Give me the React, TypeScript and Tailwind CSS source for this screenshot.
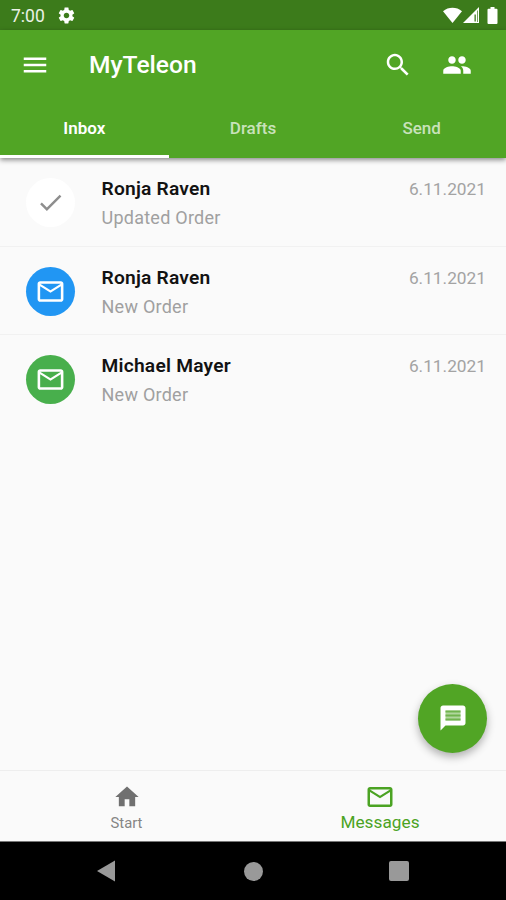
import React from "react";

const MAIL =
  "M20 4H4c-1.1 0-1.99.9-1.99 2L2 18c0 1.1.9 2 2 2h16c1.1 0 2-.9 2-2V6c0-1.1-.9-2-2-2zm0 14H4V8l8 5 8-5v10zm-8-7L4 6h16l-8 5z";
const MENU = "M3 18h18v-2H3v2zm0-5h18v-2H3v2zm0-7v2h18V6H3z";
const SEARCH =
  "M15.5 14h-.79l-.28-.27C15.41 12.59 16 11.11 16 9.5 16 5.91 13.09 3 9.5 3S3 5.91 3 9.5 5.91 16 9.5 16c1.61 0 3.09-.59 4.23-1.57l.27.28v.79l5 4.99L20.49 19l-4.99-5zm-6 0C7.01 14 5 11.99 5 9.5S7.01 5 9.5 5 14 7.01 14 9.5 11.99 14 9.5 14z";
const PEOPLE =
  "M16 11c1.66 0 2.99-1.34 2.99-3S17.66 5 16 5c-1.66 0-3 1.34-3 3s1.34 3 3 3zm-8 0c1.66 0 2.99-1.34 2.99-3S9.66 5 8 5C6.34 5 5 6.34 5 8s1.34 3 3 3zm0 2c-2.33 0-7 1.17-7 3.5V19h14v-2.5c0-2.33-4.67-3.5-7-3.5zm8 0c-.29 0-.62.02-.97.05 1.16.84 1.97 1.97 1.97 3.45V19h6v-2.5c0-2.33-4.67-3.5-7-3.5z";
const SETTINGS =
  "M19.43 12.98c.04-.32.07-.64.07-.98s-.03-.66-.07-.98l2.11-1.65c.19-.15.24-.42.12-.64l-2-3.46c-.12-.22-.39-.3-.61-.22l-2.49 1c-.52-.4-1.08-.73-1.69-.98l-.38-2.65C14.46 2.18 14.25 2 14 2h-4c-.25 0-.46.18-.49.42l-.38 2.65c-.61.25-1.17.59-1.69.98l-2.49-1c-.23-.09-.49 0-.61.22l-2 3.46c-.13.22-.07.49.12.64l2.11 1.65c-.04.32-.07.65-.07.98s.03.66.07.98l-2.11 1.65c-.19.15-.24.42-.12.64l2 3.46c.12.22.39.3.61.22l2.49-1c.52.4 1.08.73 1.69.98l.38 2.65c.03.24.24.42.49.42h4c.25 0 .46-.18.49-.42l.38-2.65c.61-.25 1.17-.59 1.69-.98l2.49 1c.23.09.49 0 .61-.22l2-3.46c.12-.22.07-.49-.12-.64l-2.11-1.65zM12 15.5c-1.93 0-3.5-1.57-3.5-3.5s1.57-3.5 3.5-3.5 3.5 1.57 3.5 3.5-1.57 3.5-3.5 3.5z";
const CHECK = "M9 16.17L4.83 12l-1.42 1.41L9 19 21 7l-1.41-1.41z";
const HOME = "M10 20v-6h4v6h5v-8h3L12 3 2 12h3v8z";
const MESSAGE =
  "M20 2H4c-1.1 0-1.99.9-1.99 2L2 22l4-4h14c1.1 0 2-.9 2-2V4c0-1.1-.9-2-2-2z";

function Icon({ d, className }: { d: string; className: string }) {
  return (
    <svg viewBox="0 0 24 24" fill="currentColor" className={className} aria-hidden="true">
      <path d={d} />
    </svg>
  );
}

function StatusBar() {
  return (
    <div className="flex h-[30px] items-center justify-between bg-[#3c7b1b] pl-[11px] pr-[8px] text-white">
      <div className="flex items-center gap-[12px]">
        <span className="pt-[3px] text-[17.5px] leading-none text-white/90">7:00</span>
        <Icon d={SETTINGS} className="size-[19px]" />
      </div>
      <div className="flex items-center">
        <svg viewBox="0 0 19 16" className="h-4 w-[19px]" fill="currentColor">
          <path d="M0 4.2C5.5-.4 13.500-.4 19 4.200L9.500 16z" />
        </svg>
        <svg viewBox="0 0 17 17" className="ml-px h-[17px] w-[17px]" fill="currentColor">
          <path d="M16 0v16H0z" />
          <path d="M11.500 7.500h1.300v7h-1.300zM14 3.500h.7V15H14z" fill="#3c7b1b" />
        </svg>
        <svg viewBox="0 0 10 17" className="ml-[7px] h-[17px] w-[11px]" fill="currentColor">
          <path d="M3 0h4v1.700h2q1 0 1 1V16q0 1-1 1H1q-1 0-1-1V2.700q0-1 1-1h2z" />
        </svg>
      </div>
    </div>
  );
}

function Header() {
  return (
    <header className="relative z-10 bg-[#51a525] text-white shadow-[0_2px_5px_rgba(0,0,0,0.45)]">
      <div className="flex h-[69px] items-center pl-[20px] pr-[34px]">
        <Icon d={MENU} className="size-[30px]" />
        <h1 className="ml-[39px] flex-1 pt-[2px] text-[24.600px] font-medium leading-none">MyTeleon</h1>
        <Icon d={SEARCH} className="size-[30px]" />
        <Icon d={PEOPLE} className="ml-[29px] size-[30px]" />
      </div>
      <nav className="grid h-[59px] grid-cols-3 text-[17px] font-medium">
        <div className="flex items-center justify-center border-b-[3px] border-white pt-[3px] font-semibold">Inbox</div>
        <div className="flex items-center justify-center text-white/70">Drafts</div>
        <div className="flex items-center justify-center text-white/70">Send</div>
      </nav>
    </header>
  );
}

type Message = { name: string; text: string; icon: string; tone: string; size: string };

const messages: Message[] = [
  { name: "Ronja Raven", text: "Updated Order", icon: CHECK, tone: "bg-white text-[#8e8e8e]", size: "size-[29px]" },
  { name: "Ronja Raven", text: "New Order", icon: MAIL, tone: "bg-[#2196f3] text-white", size: "size-[31px]" },
  { name: "Michael Mayer", text: "New Order", icon: MAIL, tone: "bg-[#48af4c] text-white", size: "size-[31px]" },
];

function Row({ name, text, icon, tone, size }: Message) {
  return (
    <li className="flex h-[88.600px] border-b border-[#f1f1f1] pl-[26px] pr-[20px] last:border-transparent">
      <div className={`mt-[20px] flex size-[49px] shrink-0 items-center justify-center rounded-full ${tone}`}>
        <Icon d={icon} className={size} />
      </div>
      <div className="ml-[26.500px] flex-1">
        <div className="mt-[19px] text-[19.200px] font-semibold leading-[24px] tracking-[0.220px] text-[#121212]">{name}</div>
        <div className="mt-[5px] text-[18px] leading-[24px] tracking-[0.250px] text-[#a0a0a0]">{text}</div>
      </div>
      <div className="mt-[19px] text-[17.300px] leading-[24px] text-[#a3a3a3]">6.11.2021</div>
    </li>
  );
}

export default function App() {
  return (
    <div className="flex h-[900px] w-[506px] flex-col overflow-hidden bg-[#fafafa] font-[Roboto,sans-serif]">
      <StatusBar />
      <Header />
      <main className="relative flex-1">
        <ul>
          {messages.map((m, i) => (
            <Row key={i} {...m} />
          ))}
        </ul>
        <button className="absolute bottom-[17px] right-[19px] flex size-[69px] items-center justify-center rounded-full bg-[#51a525] text-white shadow-[0_4px_8px_rgba(0,0,0,0.3)]">
          <svg viewBox="0 0 24 24" className="mb-px size-[30px]" fill="currentColor">
            <path d={MESSAGE} />
            <path d="M6 6h12v8H6z" fill="#b0d69d" />
            <path d="M6 6h12v1.600H6zM6 9.200h12v1.600H6zM6 12.400h12V14H6z" fill="#70b34e" />
          </svg>
        </button>
      </main>
      <nav className="grid h-[71px] grid-cols-2 border-t border-[#eeeeee]">
        <div className="flex flex-col items-center pt-[12px] text-[#707070]">
          <Icon d={HOME} className="size-[28px]" />
          <span className="mt-[3px] text-[14.800px] leading-[18px] text-[#858585]">Start</span>
        </div>
        <div className="flex flex-col items-center pl-px pt-[11px] text-[#4ba323]">
          <Icon d={MAIL} className="size-[30px]" />
          <span className="text-[17.200px] leading-[20px] tracking-[0.050px]">Messages</span>
        </div>
      </nav>
      <div className="flex h-[59px] items-center justify-between border-t border-[#777777] bg-black pl-[96px] pr-[97px]">
        <svg viewBox="0 0 20 22" className="h-[22px] w-[20px]" fill="#999999">
          <path d="M1 11 19 .500v21z" />
        </svg>
        <div className="ml-[2px] size-[19px] rounded-full bg-[#999999]" />
        <div className="size-[20px] rounded-[2px] bg-[#999999]" />
      </div>
    </div>
  );
}
